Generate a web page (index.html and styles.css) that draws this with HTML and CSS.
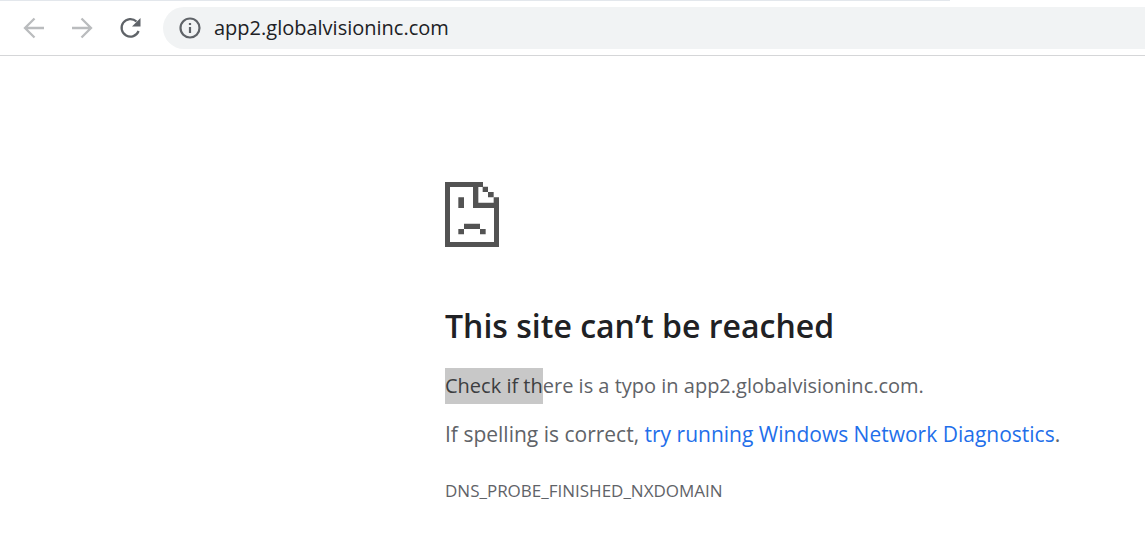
FILE: index.html
```html
<!DOCTYPE html>
<html lang="en">
<head>
<meta charset="utf-8">
<title>app2.globalvisioninc.com</title>
<link rel="stylesheet" href="styles.css">
</head>
<body>
<header class="toolbar">
  <div class="tab-edge"></div>
  <div class="toolbar-row">
    <nav class="nav-buttons" aria-label="Navigation">
      <button class="nav-button" type="button" aria-label="Back" disabled>
        <svg viewBox="0 0 24 24" fill="none" stroke="currentColor" stroke-width="2.300"><path d="M22 12H3.500M12.500 2.500L3 12l9.500 9.500"/></svg>
      </button>
      <button class="nav-button" type="button" aria-label="Forward" disabled>
        <svg viewBox="0 0 24 24" fill="none" stroke="currentColor" stroke-width="2.300"><path d="M2 12h18.500M11.500 2.500L21 12l-9.500 9.500"/></svg>
      </button>
      <button class="nav-button reload" type="button" aria-label="Reload">
        <svg viewBox="0 0 24 24" fill="none" stroke="currentColor" stroke-width="2.200"><path d="M18.500 5.500A8.800 8.800 0 1 0 20.600 15"/><path d="M22.500 2v8.500h-8.500z" fill="currentColor" stroke="none"/></svg>
      </button>
    </nav>
    <div class="address-bar">
      <button class="site-info" type="button" aria-label="View site information">
        <svg viewBox="0 0 22 22" fill="none" stroke="currentColor" stroke-width="2.200"><circle cx="11" cy="11" r="9.500"/><path d="M11 10v6M11 6v2"/></svg>
      </button>
      <input class="address" type="text" aria-label="Address" value="app2.globalvisioninc.com" spellcheck="false">
    </div>
  </div>
</header>
<main class="error-page">
  <svg class="sad-page" viewBox="0 0 162 195" fill="currentColor" aria-hidden="true">
    <path d="M0 0H114V15H100V62H146V46H162V195H0ZM15 15V180H147V78H84V15Z" fill-rule="evenodd"/>
    <path d="M113 14h16v16h-16zM129 30h17v16h-17zM40 46h17v32H40zM57 125h48v16H57zM40 141h17v16H40zM105 141h17v16h-17z"/>
  </svg>
  <h1 class="title">This site can’t be reached</h1>
  <p class="message hint"><mark class="selected">Check if th</mark>ere is a typo in app2.globalvisioninc.com.</p>
  <p class="message">If spelling is correct, <a class="link" href="#">try running Windows Network Diagnostics</a>.</p>
  <p class="error-code">DNS_PROBE_FINISHED_NXDOMAIN</p>
</main>
</body>
</html>
```
FILE: styles.css
```css
* {
  box-sizing: border-box;
}

body {
  margin: 0;
  background: #fff;
  color: #5f6368;
  font-family: "Open Sans", "Noto Sans", sans-serif;
}

.toolbar {
  border-bottom: 1px solid #d5d6d8;
}

.tab-edge {
  width: 83%;
  height: 1px;
  background: #e3e7ec;
}

.toolbar-row {
  display: flex;
  align-items: center;
  gap: 21px;
  padding: 6px 0 6px 22px;
}

.nav-buttons {
  display: flex;
  gap: 24px;
}

.nav-button,
.site-info {
  display: flex;
  padding: 0;
  border: 0;
  background: none;
  color: #5f6368;
}

.nav-button svg {
  width: 24px;
  height: 24px;
}

.nav-button:disabled {
  color: #babcbe;
}

.address-bar {
  flex: 1;
  display: flex;
  align-items: center;
  gap: 13px;
  height: 42px;
  padding-left: 16px;
  border-radius: 21px 0 0 21px;
  background: #f1f3f4;
}

.site-info svg {
  width: 22px;
  height: 22px;
}

.address {
  flex: 1;
  min-width: 0;
  padding: 0;
  border: 0;
  outline: 0;
  background: none;
  color: #202124;
  font: 20px/28px "Open Sans", "Noto Sans", sans-serif;
}

.error-page {
  margin-left: 445px;
  padding-top: 126px;
}

.sad-page {
  display: block;
  width: 54px;
  height: 65px;
  color: #535353;
}

.title {
  margin: 55px 0 18px;
  color: #202124;
  font-size: 32px;
  font-weight: 600;
  line-height: 48px;
}

.message {
  margin: 0 0 12px;
  font-size: 21px;
  line-height: 36px;
}

.hint {
  font-size: 20px;
}

.selected {
  display: inline-block;
  background: #c8c8c8;
  color: #3c3e40;
}

.link {
  color: #1f6fea;
  text-decoration: none;
}

.error-code {
  margin: 24px 0 0;
  font-size: 17px;
  line-height: 30px;
}
```
